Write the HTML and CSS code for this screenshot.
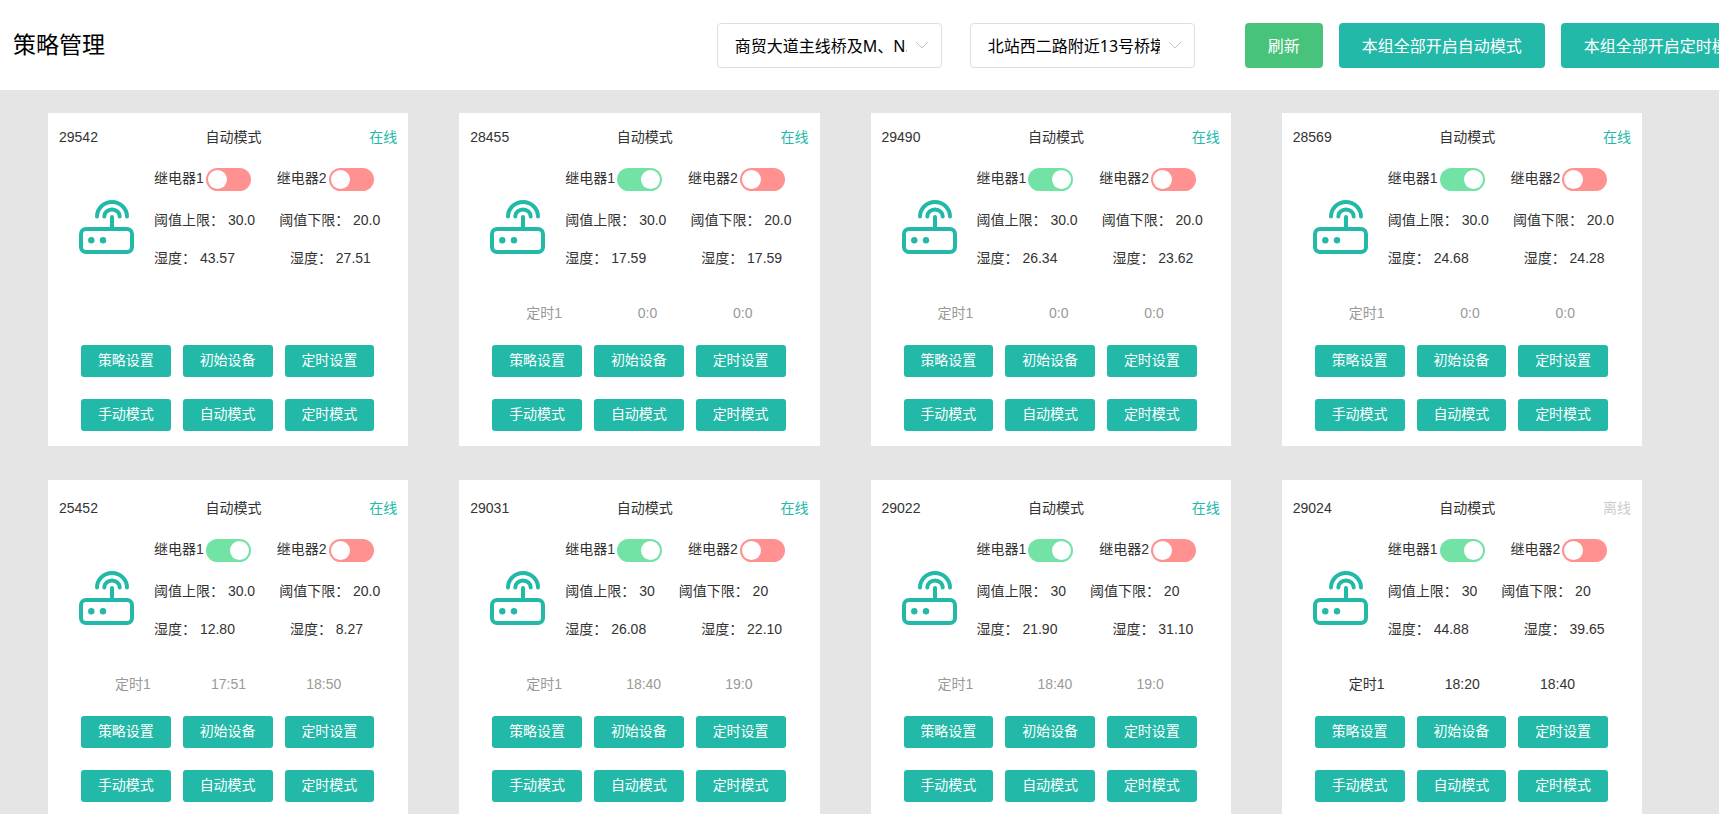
FILE: index.html
```html
<!DOCTYPE html>
<html lang="zh-CN">
<head>
<meta charset="utf-8">
<title>策略管理</title>
<link rel="stylesheet" href="styles.css">
</head>
<body>
<header class="topbar">
  <h1 class="topbar-title">策略管理</h1>
  <div class="topbar-filters">
    <div class="picker">
      <select class="picker-select" aria-label="分组">
        <option>商贸大道主线桥及M、N.</option>
      </select>
      <svg class="picker-arrow" viewBox="0 0 14 8" aria-hidden="true"><path d="M1 1l6 6 6-6"/></svg>
    </div>
    <div class="picker">
      <select class="picker-select" aria-label="位置">
        <option>北站西二路附近13号桥墩</option>
      </select>
      <svg class="picker-arrow" viewBox="0 0 14 8" aria-hidden="true"><path d="M1 1l6 6 6-6"/></svg>
    </div>
  </div>
  <div class="topbar-actions">
    <button class="action action-refresh" type="button">刷新</button>
    <button class="action" type="button">本组全部开启自动模式</button>
    <button class="action" type="button">本组全部开启定时模式</button>
  </div>
</header>
<main class="board">
  <div class="board-scroll">
    <div class="cards" id="cards"></div>
  </div>
</main>
<script src="app.js"></script>
</body>
</html>
```

FILE: styles.css
```css
* {
  box-sizing: border-box;
}

body {
  margin: 0;
  height: 100vh;
  display: flex;
  flex-direction: column;
  overflow: hidden;
  background: #e5e5e5;
  color: #333;
  font: 14px/20px "Liberation Sans", "Noto Sans CJK SC", sans-serif;
}

button,
select {
  font: inherit;
}

.topbar {
  display: flex;
  align-items: center;
  flex: none;
  height: 90px;
  background: #fff;
  overflow: hidden;
  white-space: nowrap;
  font-family: "Noto Sans", "Noto Sans CJK SC", sans-serif;
  font-size: 16px;
}

.topbar-title {
  flex: 0 0 41.7%;
  margin: 0;
  padding: 0 0 2px 13px;
  color: #000;
  font-size: 23px;
  font-weight: 400;
  line-height: 32px;
}

.topbar-filters {
  display: flex;
  flex: none;
  gap: 28px;
  margin-right: 50px;
}

.picker {
  position: relative;
  width: 225px;
}

.picker-select {
  appearance: none;
  display: block;
  width: 100%;
  height: 45px;
  padding: 2px 34px 0 17px;
  border: 1px solid #dcdfe6;
  border-radius: 4px;
  background: #fff;
  color: #000;
}

.picker-arrow {
  position: absolute;
  right: 13px;
  top: 18px;
  width: 14px;
  height: 8px;
  fill: none;
  stroke: #c0c4cc;
  pointer-events: none;
}

.topbar-actions {
  display: flex;
  flex: none;
  gap: 16px;
}

.action {
  height: 45px;
  padding: 2px 23px 0;
  border: 0;
  border-radius: 4px;
  background: #22b9a9;
  color: #fff;
}

.action-refresh {
  background: #48c37b;
}

.board {
  flex: 1;
  min-height: 0;
  padding-top: 23px;
}

.board-scroll {
  height: 100%;
  overflow: hidden;
}

.cards {
  display: grid;
  grid-template-columns: repeat(4, 1fr);
  gap: 34px 51px;
  margin-top: -4px;
  padding: 0 77px 0 48px;
}

.card {
  padding-bottom: 15px;
  background: #fff;
  white-space: nowrap;
}

.card-head {
  display: flex;
  justify-content: space-between;
  padding: 18px 11px 0;
}

.online {
  color: #22b9a9;
}

.offline {
  color: #ccc;
}

.card-body {
  display: flex;
  align-items: center;
  gap: 20px;
  margin-top: 21px;
  padding-left: 31px;
}

.router {
  flex: none;
  width: 55px;
  height: 54px;
  margin-top: 18px;
  fill: none;
  stroke: #22b9a9;
  stroke-width: 4;
  stroke-linecap: round;
}

.router-light {
  fill: #22b9a9;
  stroke: none;
}

.row {
  display: flex;
}

.relays {
  gap: 26px;
}

.relay {
  display: flex;
  align-items: flex-start;
  gap: 2px;
}

.switch {
  appearance: none;
  display: flex;
  width: 45px;
  height: 23px;
  margin: 0;
  padding: 2px;
  border-radius: 12px;
  background: #ff9191;
}

.switch::before {
  content: "";
  width: 19px;
  height: 19px;
  border-radius: 50%;
  background: #fff;
}

.switch:checked {
  justify-content: flex-end;
  background: #73e3a5;
}

.limits {
  gap: 24px;
  margin-top: 19px;
}

.humidity {
  gap: 55px;
  margin-top: 18px;
}

.timer {
  display: flex;
  justify-content: space-between;
  height: 20px;
  margin-top: 35px;
  padding: 0 67px;
  color: #999;
}

.timer-active {
  color: #333;
}

.card-buttons {
  display: grid;
  grid-template-columns: repeat(3, 1fr);
  gap: 22px 12px;
  margin-top: 22px;
  padding: 0 34px 0 33px;
}

.card-button {
  height: 32px;
  padding: 0 0 2px;
  border: 0;
  border-radius: 3px;
  background: #22b9a9;
  color: #fff;
}
```

FILE: app.js
```js
const devices = [
  { id: "29542", on: false, high: "30.0", low: "20.0", h1: "43.57", h2: "27.51", timer: null },
  { id: "28455", on: true, high: "30.0", low: "20.0", h1: "17.59", h2: "17.59", timer: ["0:0", "0:0"] },
  { id: "29490", on: true, high: "30.0", low: "20.0", h1: "26.34", h2: "23.62", timer: ["0:0", "0:0"] },
  { id: "28569", on: true, high: "30.0", low: "20.0", h1: "24.68", h2: "24.28", timer: ["0:0", "0:0"] },
  { id: "25452", on: true, high: "30.0", low: "20.0", h1: "12.80", h2: "8.27", timer: ["17:51", "18:50"] },
  { id: "29031", on: true, high: "30", low: "20", h1: "26.08", h2: "22.10", timer: ["18:40", "19:0"] },
  { id: "29022", on: true, high: "30", low: "20", h1: "21.90", h2: "31.10", timer: ["18:40", "19:0"] },
  { id: "29024", on: true, high: "30", low: "20", h1: "44.88", h2: "39.65", timer: ["18:20", "18:40"], offline: true, active: true }
];

const commands = ["策略设置", "初始设备", "定时设置", "手动模式", "自动模式", "定时模式"];

const relay = (id, n, on) => `
  <div class="relay">
    <label for="relay-${id}-${n}">继电器${n}</label>
    <input class="switch" type="checkbox" role="switch" id="relay-${id}-${n}"${on ? " checked" : ""}>
  </div>`;

const card = d => `
  <article class="card">
    <div class="card-head">
      <span>${d.id}</span>
      <span>自动模式</span>
      <span class="${d.offline ? "offline" : "online"}">${d.offline ? "离线" : "在线"}</span>
    </div>
    <div class="card-body">
      <svg class="router" viewBox="0 0 55 54" aria-hidden="true">
        <rect x="2" y="29" width="51" height="23" rx="5"/>
        <path d="M33 17v12M18 16.500a15 14.500 0 0 1 30 0M25.300 16.500a7.700 7 0 0 1 15.400 0"/>
        <circle class="router-light" cx="12.300" cy="40.300" r="3.200"/>
        <circle class="router-light" cx="24" cy="40.300" r="3.200"/>
      </svg>
      <div>
        <div class="row relays">${relay(d.id, 1, d.on)}${relay(d.id, 2, false)}</div>
        <div class="row limits"><span>阈值上限： ${d.high}</span><span>阈值下限： ${d.low}</span></div>
        <div class="row humidity"><span>湿度： ${d.h1}</span><span>湿度： ${d.h2}</span></div>
      </div>
    </div>
    <div class="timer${d.active ? " timer-active" : ""}">
      ${d.timer ? `<span>定时1</span><span>${d.timer[0]}</span><span>${d.timer[1]}</span>` : ""}
    </div>
    <div class="card-buttons">
      ${commands.map(c => `<button class="card-button" type="button">${c}</button>`).join("")}
    </div>
  </article>`;

document.getElementById("cards").innerHTML = devices.map(card).join("");
```
